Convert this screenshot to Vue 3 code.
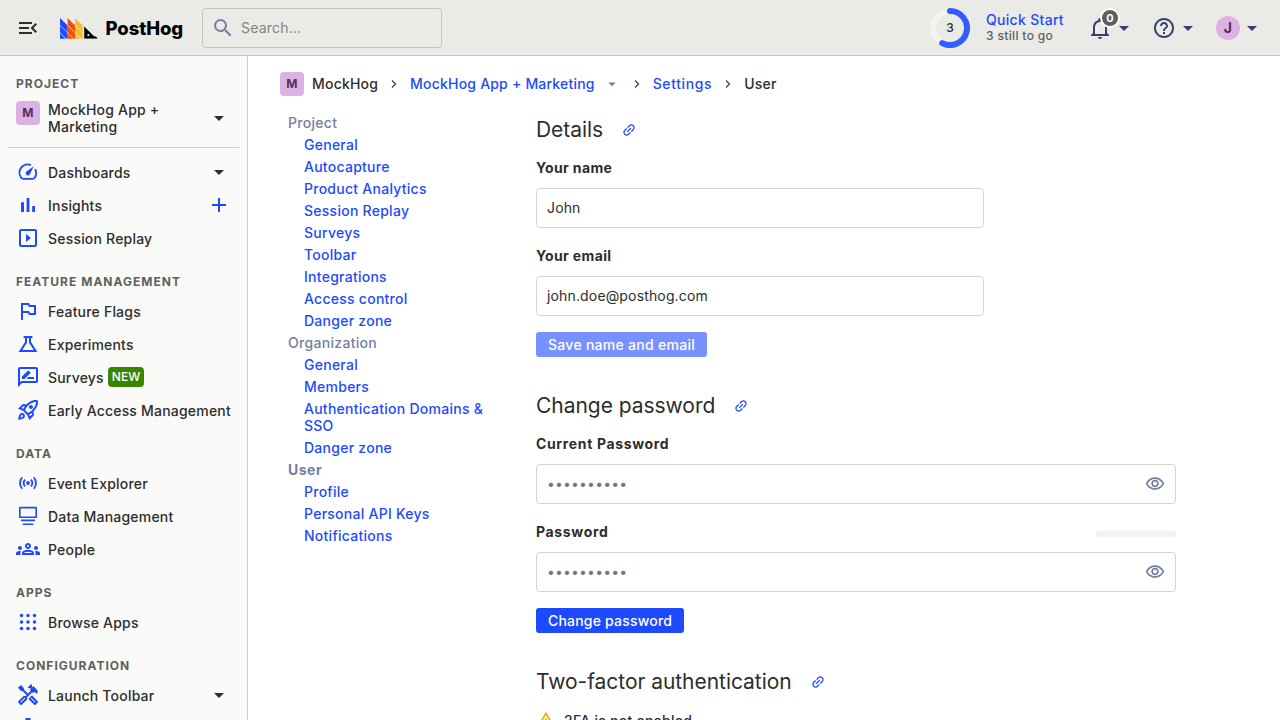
<script setup>
const icons = {
  menu: 'M3 18h13v-2H3v2zm0-5h10v-2H3v2zm0-7v2h13V6H3zm18 9.59L17.42 12 21 8.41 19.59 7l-5 5 5 5L21 15.59z',
  search: 'M15.5 14h-.79l-.28-.27A6.47 6.47 0 0016 9.5 6.5 6.5 0 109.5 16c1.61 0 3.09-.59 4.23-1.57l.27.28v.79l5 4.99L20.49 19l-4.99-5zm-6 0C7.01 14 5 11.99 5 9.5S7.01 5 9.5 5 14 7.01 14 9.5 11.99 14 9.5 14z',
  bell: 'M10 21h4c0 1.1-.9 2-2 2s-2-.9-2-2m11-2v1H3v-1l2-2v-6c0-3.1 2.03-5.83 5-6.71V4a2 2 0 012-2 2 2 0 012 2v.29c2.97.88 5 3.61 5 6.71v6l2 2m-4-8a5 5 0 00-5-5 5 5 0 00-5 5v7h10v-7z',
  help: 'M11 18h2v-2h-2v2zm1-16C6.48 2 2 6.48 2 12s4.48 10 10 10 10-4.48 10-10S17.52 2 12 2zm0 18c-4.41 0-8-3.59-8-8s3.59-8 8-8 8 3.59 8 8-3.59 8-8 8zm0-14c-2.21 0-4 1.79-4 4h2c0-1.1.9-2 2-2s2 .9 2 2c0 2-3 1.75-3 5h2c0-2.25 3-2.5 3-5 0-2.21-1.79-4-4-4z',
  caret: 'M7 10l5 5 5-5z',
  bars: 'M5 9.2h3V19H5zM10.6 5h2.8v14h-2.8zm5.6 8H19v6h-2.8z',
  replay: 'M10 8v8l5-4-5-4zm9-5H5c-1.1 0-2 .9-2 2v14c0 1.1.9 2 2 2h14c1.1 0 2-.9 2-2V5c0-1.1-.9-2-2-2zm0 16H5V5h14v14z',
  flag: 'M14 6l-1-2H5v17h2v-7h5l1 2h7V6h-6zm4 8h-4l-1-2H7V6h5l1 2h5v6z',
  survey: 'M20 2H4c-1.1 0-1.99.9-1.99 2L2 22l4-4h14c1.1 0 2-.9 2-2V4c0-1.1-.9-2-2-2zm0 14H5.17L4 17.17V4h16v12zm-9.5-2H18v-2h-5.5zm3.86-5.87c.2-.2.2-.51 0-.71l-1.77-1.77c-.2-.2-.51-.2-.71 0L6 11.53V14h2.47l5.89-5.87z',
  rocket: 'M6 15c-.83 0-1.58.34-2.12.88C2.7 17.06 2 22 2 22s4.94-.7 6.12-1.88A2.996 2.996 0 006 15zm.71 3.71c-.28.28-2.17.76-2.17.76s.47-1.88.76-2.17c.17-.19.42-.3.7-.3a1.003 1.003 0 01.71 1.71zm10.71-5.06c6.36-6.36 4.24-11.31 4.24-11.31S16.71.22 10.35 6.58l-2.49-.5a2.03 2.03 0 00-1.81.55L2 10.69l5 2.14L11.17 17l2.14 5 4.05-4.05c.47-.47.68-1.15.55-1.81l-.49-2.49zM7.41 10.83l-1.91-.82 1.97-1.97 1.44.29c-.57.83-1.08 1.7-1.5 2.5zm6.58 7.67l-.82-1.91c.8-.42 1.67-.93 2.49-1.5l.29 1.44-1.96 1.97zM16 12.24c-1.32 1.32-3.38 2.4-4.04 2.73l-2.93-2.93c.32-.65 1.4-2.71 2.73-4.04 4.68-4.68 8.23-3.99 8.23-3.99s.69 3.55-3.99 8.23zM15 11c1.1 0 2-.9 2-2s-.9-2-2-2-2 .9-2 2 .9 2 2 2z',
  people: 'M4 13c1.1 0 2-.9 2-2s-.9-2-2-2-2 .9-2 2 .9 2 2 2zm1.13 1.1C4.76 14.04 4.39 14 4 14c-.99 0-1.93.21-2.78.58A2.01 2.01 0 000 16.43V18h4.5v-1.61c0-.83.23-1.61.63-2.29zM20 13c1.1 0 2-.9 2-2s-.9-2-2-2-2 .9-2 2 .9 2 2 2zm4 3.43c0-.81-.48-1.53-1.22-1.85A6.95 6.95 0 0020 14c-.39 0-.76.04-1.13.1.4.68.63 1.46.63 2.29V18H24v-1.57zm-7.76-2.78c-1.17-.52-2.61-.9-4.24-.9s-3.07.39-4.24.9C6.68 14.13 6 15.21 6 16.39V18h12v-1.61c0-1.18-.68-2.26-1.76-2.74zM8.07 16c.09-.23.13-.39.91-.69.97-.38 1.99-.56 3.02-.56s2.05.18 3.02.56c.77.3.81.46.91.69H8.07zM12 8c.55 0 1 .45 1 1s-.45 1-1 1-1-.45-1-1 .45-1 1-1m0-2c-1.66 0-3 1.34-3 3s1.34 3 3 3 3-1.34 3-3-1.34-3-3-3z',
  tools: 'M21.67 18.17l-5.3-5.3h-.99l-2.54 2.54v.99l5.3 5.3c.39.39 1.02.39 1.41 0l2.12-2.12a.996.996 0 000-1.41zm-2.83 1.42l-4.24-4.24.71-.71 4.24 4.24-.71.71zM17.34 10.19l1.41-1.41 2.12 2.12c1.17-1.17 1.17-3.07 0-4.24l-3.54-3.54-1.41 1.41V1.71L15.22 1l-3.54 3.54.71.71h2.83l-1.41 1.41 1.06 1.06-2.89 2.89-4.13-4.13V5.06L4.83 2.04 2 4.87 5.03 7.9h1.41l4.13 4.13-.85.85H7.6l-5.3 5.3a.996.996 0 000 1.41l2.12 2.12c.39.39 1.02.39 1.41 0l5.3-5.3v-2.12l5.15-5.15 1.06 1.05zm-7.98 5.15l-4.24 4.24-.71-.71 4.24-4.24.71.71z',
  gear: 'M12 15.5A3.5 3.5 0 018.5 12 3.5 3.5 0 0112 8.5a3.5 3.5 0 013.5 3.5 3.5 3.5 0 01-3.5 3.5m7.43-2.53c.04-.32.07-.64.07-.97s-.03-.66-.07-1l2.11-1.63c.19-.15.24-.42.12-.64l-2-3.46c-.12-.22-.39-.31-.61-.22l-2.49 1c-.52-.39-1.06-.73-1.69-.98l-.37-2.65A.506.506 0 0014 2h-4c-.25 0-.46.18-.5.42l-.37 2.65c-.63.25-1.17.59-1.69.98l-2.49-1c-.22-.09-.49 0-.61.22l-2 3.46c-.13.22-.07.49.12.64L4.57 11c-.04.34-.07.67-.07 1s.03.65.07.97l-2.11 1.66c-.19.15-.25.42-.12.64l2 3.46c.12.22.39.3.61.22l2.49-1.01c.52.4 1.06.74 1.69.99l.37 2.65c.04.24.25.42.5.42h4c.25 0 .46-.18.5-.42l.37-2.65c.63-.26 1.17-.59 1.69-.99l2.49 1.01c.22.08.49 0 .61-.22l2-3.46c.12-.22.07-.49-.12-.64z',
  eye: 'M12 6c3.79 0 7.17 2.13 8.82 5.5C19.17 14.87 15.79 17 12 17s-7.17-2.13-8.82-5.5C4.83 8.13 8.21 6 12 6m0-2C7 4 2.73 7.11 1 11.5 2.73 15.89 7 19 12 19s9.27-3.11 11-7.5C21.27 7.11 17 4 12 4zm0 5a2.5 2.5 0 010 5 2.5 2.5 0 010-5m0-2c-2.48 0-4.5 2.02-4.5 4.5S9.52 16 12 16s4.5-2.02 4.5-4.5S14.48 7 12 7z',
  link: 'M3.9 12c0-1.71 1.39-3.1 3.1-3.1h4V7H7c-2.76 0-5 2.24-5 5s2.24 5 5 5h4v-1.9H7c-1.71 0-3.1-1.39-3.1-3.1zM8 13h8v-2H8v2zm9-6h-4v1.9h4c1.71 0 3.1 1.39 3.1 3.1s-1.39 3.1-3.1 3.1h-4V17h4c2.76 0 5-2.24 5-5s-2.24-5-5-5z',
  warning: 'M12 5.99L19.53 19H4.47L12 5.99M12 2L1 21h22L12 2zm1 14h-2v2h2v-2zm0-6h-2v4h2v-4z',
}
const strokes = {
  gauge: 'M14.9 5.2A8.1 8.1 0 0 0 5.2 17.6Q6 18.9 7.4 18.9H16.6Q18 18.9 18.8 17.6A8.1 8.1 0 0 0 19.1 9.3',
  flask: 'M7.6 5h8.8M10 5v5.4L4.4 19h15.2L14 10.4V5',
  sensors: 'M6.2 6.2Q1.8 12 6.2 17.8M17.8 6.2Q22.2 12 17.8 17.8M9 8.6Q6.3 12 9 15.4M15 8.6Q17.7 12 15 15.4',
  database: 'M3.8 3.6h16.4v9.6H3.8zM5 16.4h14M6.7 20.2h10.6',
}
const sections = [
  { items: [
    { t: 'Dashboards', i: 'gauge', caret: true },
    { t: 'Insights', i: 'bars', plus: true },
    { t: 'Session Replay', i: 'replay' },
  ] },
  { title: 'Feature management', items: [
    { t: 'Feature Flags', i: 'flag' },
    { t: 'Experiments', i: 'flask' },
    { t: 'Surveys', i: 'survey', tag: 'NEW' },
    { t: 'Early Access Management', i: 'rocket' },
  ] },
  { title: 'Data', items: [
    { t: 'Event Explorer', i: 'sensors' },
    { t: 'Data Management', i: 'database' },
    { t: 'People', i: 'people' },
  ] },
  { title: 'Apps', items: [{ t: 'Browse Apps', i: 'apps' }] },
  { title: 'Configuration', items: [
    { t: 'Launch Toolbar', i: 'tools', caret: true },
    { i: 'gear' },
  ] },
]
const settings = [
  { t: 'Project', items: ['General', 'Autocapture', 'Product Analytics', 'Session Replay', 'Surveys', 'Toolbar', 'Integrations', 'Access control', 'Danger zone'] },
  { t: 'Organization', items: ['General', 'Members', 'Authentication Domains & SSO', 'Danger zone'] },
  { t: 'User', active: true, items: ['Profile', 'Personal API Keys', 'Notifications'] },
]
const dots = [5.5, 12, 18.5]
const logoColumns = [
  { x: 0, c: '#1d4aff' },
  { x: 7.6, c: '#f54e00' },
  { x: 15.2, c: '#f9bd2b' },
]
</script>

<template>
  <div class="app">
    <header class="topbar">
      <svg class="icon dark" viewBox="0 0 24 24"><path :d="icons.menu" /></svg>
      <div class="brand">
        <svg class="logo" viewBox="0 0 38 21" width="38" height="21">
          <defs><clipPath id="floor"><rect width="38" height="20.7" /></clipPath></defs>
          <g clip-path="url(#floor)">
            <g v-for="col in logoColumns" :key="col.x" :fill="col.c" :transform="`translate(${col.x} 0)`">
              <path d="M0 0L7.6 7.6V14.4L0 6.8zM0 7.6L7.6 15.2V22L0 14.4zM0 15.2L6.8 22H0z" />
            </g>
            <path d="M24.2 8.6L34 18.2Q37.4 18.6 37.4 20.7H24.2z" fill="#000" />
            <circle cx="28.3" cy="17" r="1" fill="#fff" />
          </g>
        </svg>
        <span class="wordmark">PostHog</span>
      </div>
      <div class="search">
        <svg class="icon" viewBox="0 0 24 24"><path :d="icons.search" /></svg>
        <span>Search...</span>
      </div>
      <div class="spacer"></div>
      <div class="quick">
        <svg class="ring" viewBox="0 0 40 40" width="40" height="40">
          <circle cx="20" cy="20" r="17" fill="none" stroke="#f3f3f2" stroke-width="6" />
          <path d="M20 3A17 17 0 1 1 12.2 35.1" fill="none" stroke="#345cff" stroke-width="6" stroke-linecap="round" />
          <text x="20" y="24.4" text-anchor="middle">3</text>
        </svg>
        <div class="quick-text"><b>Quick Start</b><span>3 still to go</span></div>
      </div>
      <div class="tool bell">
        <svg class="icon" viewBox="0 0 24 24"><path :d="icons.bell" /></svg>
        <span class="count">0</span>
        <svg class="icon caret" viewBox="0 0 24 24"><path :d="icons.caret" /></svg>
      </div>
      <div class="tool">
        <svg class="icon" viewBox="0 0 24 24"><path :d="icons.help" /></svg>
        <svg class="icon caret" viewBox="0 0 24 24"><path :d="icons.caret" /></svg>
      </div>
      <div class="tool">
        <span class="avatar">J</span>
        <svg class="icon caret" viewBox="0 0 24 24"><path :d="icons.caret" /></svg>
      </div>
    </header>

    <div class="body">
      <aside class="sidebar">
        <h5>Project</h5>
        <div class="project">
          <span class="lettermark">M</span>
          <span class="label">MockHog App + Marketing</span>
          <svg class="icon dark" viewBox="0 0 24 24"><path :d="icons.caret" /></svg>
        </div>
        <div class="divider"></div>
        <template v-for="(s, n) in sections" :key="n">
          <h5 v-if="s.title">{{ s.title }}</h5>
          <ul>
            <li v-for="it in s.items" :key="it.i">
              <svg class="icon" viewBox="0 0 24 24">
                <g v-if="it.i === 'apps'">
                  <template v-for="y in dots" :key="y">
                    <circle v-for="x in dots" :key="x" :cx="x" :cy="y" r="1.75" />
                  </template>
                </g>
                <path v-else-if="strokes[it.i]" :class="['line', it.i]" :d="strokes[it.i]" />
                <path v-else :d="icons[it.i]" />
                <path v-if="it.i === 'gauge'" d="M17.8 6.2L13.9 14.2A2.2 2.2 0 1 1 10.4 11.6z" />
                <circle v-if="it.i === 'sensors'" cx="12" cy="12" r="1.9" />
              </svg>
              <span v-if="it.t" class="label">{{ it.t }}<span v-if="it.tag" class="tag">{{ it.tag }}</span></span>
              <svg v-if="it.caret" class="icon dark" viewBox="0 0 24 24"><path :d="icons.caret" /></svg>
              <svg v-if="it.plus" class="icon" viewBox="0 0 24 24"><path class="line" d="M12 5v14M5 12h14" /></svg>
            </li>
          </ul>
        </template>
      </aside>

      <main>
        <nav class="crumbs">
          <span class="lettermark">M</span>
          <span class="first">MockHog</span>
          <svg class="chev" viewBox="0 0 16 16"><path d="M6 4.5L9.5 8L6 11.5" /></svg>
          <a>MockHog App + Marketing</a>
          <svg class="small-caret" viewBox="0 0 24 24"><path :d="icons.caret" /></svg>
          <svg class="chev" viewBox="0 0 16 16"><path d="M6 4.5L9.5 8L6 11.5" /></svg>
          <a class="wide">Settings</a>
          <svg class="chev" viewBox="0 0 16 16"><path d="M6 4.5L9.5 8L6 11.5" /></svg>
          <span>User</span>
        </nav>
        <div class="columns">
          <nav class="settings">
            <template v-for="g in settings" :key="g.t">
              <div :class="['group', { active: g.active }]">{{ g.t }}</div>
              <a v-for="l in g.items" :key="l">{{ l }}</a>
            </template>
          </nav>
          <div class="content">
            <section class="narrow">
              <h2>Details<svg class="anchor" viewBox="0 0 24 24"><path :d="icons.link" /></svg></h2>
              <label>Your name</label>
              <div class="input">John</div>
              <label>Your email</label>
              <div class="input">john.doe@posthog.com</div>
              <button class="disabled">Save name and email</button>
            </section>
            <section>
              <h2>Change password<svg class="anchor" viewBox="0 0 24 24"><path :d="icons.link" /></svg></h2>
              <label class="wide">Current Password</label>
              <div class="input"><span class="ph">••••••••••</span><svg class="eye" viewBox="0 0 24 24"><path :d="icons.eye" /></svg></div>
              <label class="wide">Password<span class="strength"></span></label>
              <div class="input"><span class="ph">••••••••••</span><svg class="eye" viewBox="0 0 24 24"><path :d="icons.eye" /></svg></div>
              <button>Change password</button>
            </section>
            <section>
              <h2>Two-factor authentication<svg class="anchor" viewBox="0 0 24 24"><path :d="icons.link" /></svg></h2>
              <div class="warn"><svg viewBox="0 0 24 24"><path :d="icons.warning" /></svg>2FA is not enabled.</div>
            </section>
          </div>
        </div>
      </main>
    </div>
  </div>
</template>

<style>
body { overflow: hidden; }
</style>
<style scoped>
* { box-sizing: border-box; }
.app { height: 720px; overflow: hidden; display: flex; flex-direction: column; background: #fff; color: #2d2d2d; font: 500 14px/17px Inter, sans-serif; letter-spacing: 0.2px; }
.icon { width: 24px; height: 24px; flex: none; fill: currentColor; }
.dark { color: #2d2d2d; }
.line { fill: none; stroke: currentColor; stroke-width: 2; }
.line.gauge { stroke-width: 1.9; }
.line.database { stroke-width: 1.6; stroke-linejoin: round; }
.line.sensors { stroke-width: 1.8; }
.topbar { height: 56px; flex: none; display: flex; align-items: center; padding: 0 16px; background: #eaebe6; border-bottom: 1px solid #c5c6c3; }
.brand { display: flex; align-items: center; width: 142px; margin-left: 20px; }
.logo { flex: none; margin-top: 1px; }
.wordmark { margin-left: 7.5px; color: #000; font-weight: 800; font-size: 18.5px; line-height: 24px; letter-spacing: -0.1px; }
.search { display: flex; align-items: center; width: 240px; height: 40px; padding-left: 8px; gap: 6px; border: 1px solid #c3c4c0; border-radius: 4px; color: #83837f; font-weight: 400; }
.search .icon { color: #747ea2; }
.spacer { flex: 1; }
.quick { display: flex; align-items: center; gap: 16px; margin-right: 24px; }
.ring text { font-size: 12px; fill: #2d2d2d; }
.quick-text { display: flex; flex-direction: column; width: 78px; white-space: nowrap; }
.quick-text b { color: #1d4aff; font-weight: 500; line-height: 16px; letter-spacing: 0.3px; }
.quick-text span { color: #5f5f5d; font-size: 12px; line-height: 15px; letter-spacing: 0.35px; }
.tool { position: relative; display: flex; align-items: center; color: #35416b; margin-left: 16px; }
.tool.bell { margin-left: 0; }
.count { position: absolute; left: 12px; top: -8px; width: 20px; height: 20px; border: 2px solid #fff; border-radius: 50%; background: #5f5f5f; color: #fff; font-size: 11px; font-weight: 700; line-height: 16px; text-align: center; }
.avatar { width: 24px; height: 24px; border-radius: 50%; background: #dcb1e3; color: #572e5e; font-weight: 700; line-height: 24px; text-align: center; }
.body { display: flex; flex: 1; min-height: 0; }
.sidebar { width: 248px; flex: none; padding: 0 8px; background: #fafaf9; border-right: 1px solid #cfcfce; overflow: hidden; }
h5 { margin: 0; height: 41px; padding: 19px 8px 0; font-size: 12px; line-height: 17px; font-weight: 700; letter-spacing: 1.02px; text-transform: uppercase; color: #5f5f5f; }
.project { display: flex; align-items: center; height: 42px; padding: 0 8px; gap: 8px; }
.project .lettermark { align-self: flex-start; margin-top: 4px; }
.project .label, li .label { flex: 1; white-space: nowrap; }
.project .label { white-space: normal; }
.lettermark { width: 24px; height: 24px; flex: none; border-radius: 4px; background: #dcb1e3; color: #572e5e; font-size: 12px; font-weight: 700; line-height: 24px; text-align: center; }
.divider { height: 1px; margin: 8px 0; background: #d0d0cf; }
ul { list-style: none; margin: 0; padding: 0; display: flex; flex-direction: column; gap: 1px; }
li { display: flex; align-items: center; height: 32px; padding: 0 8px; gap: 8px; }
li .icon:not(.dark) { color: #1d4aff; }
li .label { display: flex; align-items: center; padding-top: 1px; }
.tag { margin: -3px 0 -1px 4px; padding: 0 4px; height: 20px; line-height: 20px; border-radius: 4px; background: #388600; color: #fff; font-size: 12px; letter-spacing: 0; }
main { flex: 1; min-width: 0; padding: 16px 32px 0; }
.crumbs { display: flex; align-items: center; height: 24px; }
.crumbs > a, .crumbs > span:not(.lettermark) { margin-top: -1px; }
a { color: #1d4aff; }
.wide { letter-spacing: 0.62px; }
.first { margin-left: 8px; }
.chev { width: 16px; height: 16px; margin: 0 8px; fill: none; stroke: #35416b; stroke-width: 1.3; }
.small-caret { width: 18px; height: 18px; margin: 0 0 0 8px; fill: #747ea2; }
.columns { display: flex; margin-top: 16px; }
.settings { width: 216px; margin-right: 40px; }
.group, .settings a { display: block; padding: 2px 8px 3px; }
.settings a { padding-left: 24px; letter-spacing: 0.26px; }
.group { color: #747ea2; letter-spacing: 0.3px; }
.group.active { font-weight: 700; letter-spacing: 0.5px; }
.content { width: 640px; }
h2 { display: flex; align-items: center; margin: 0 0 13px; height: 34px; padding-top: 2px; font-size: 21px; line-height: 32px; font-weight: 400; letter-spacing: -0.04px; }
.anchor { width: 16px; height: 16px; margin: -1px 0 0 18px; fill: #1d4aff; transform: rotate(-45deg); }
.narrow { width: 448px; }
section { height: 276px; }
label { display: flex; align-items: center; justify-content: space-between; height: 17px; margin-bottom: 12px; font-weight: 700; letter-spacing: 0.36px; }
label.wide { letter-spacing: 0.65px; }
.input { display: flex; align-items: center; justify-content: space-between; height: 40px; margin-bottom: 19px; padding: 0 10px 1px; border: 1px solid #d5d5d5; border-radius: 4px; font-weight: 400; letter-spacing: 0.15px; }
.ph { color: #777; }
.eye { width: 20px; height: 20px; fill: #747ea2; }
.strength { width: 80px; height: 6px; margin-top: 5px; border-radius: 2px; background: #f3f3f3; }
button { display: block; height: 25px; margin-top: -3px; padding: 0 12px; border: 0; border-radius: 3px; background: #1d4aff; color: #fff; font: 500 14px/25px Inter, sans-serif; letter-spacing: 0.2px; }
button.disabled { background: #7792ff; letter-spacing: 0.28px; }
.warn { display: flex; align-items: center; gap: 8px; margin-top: -1px; letter-spacing: 0.28px; }
.warn svg { width: 20px; height: 20px; fill: #f7a501; }
</style>
